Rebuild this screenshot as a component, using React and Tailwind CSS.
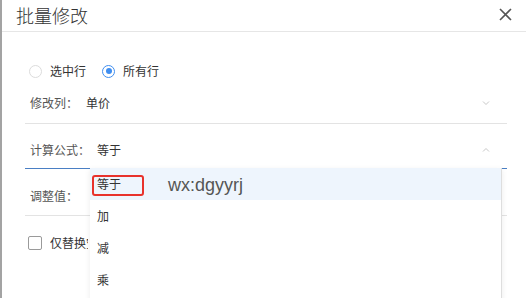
import React from "react";

const font = { fontFamily: '"Noto Sans CJK SC", "Noto Sans", sans-serif' };

function Chevron({ up }) {
  return (
    <svg width="10" height="10" viewBox="0 0 10 10" className="text-[#c8c8c8]">
      <path
        d={up ? "M2 6.5 L5 3.5 L8 6.5" : "M2 3.5 L5 6.5 L8 3.5"}
        fill="none"
        stroke="currentColor"
        strokeWidth="1"
      />
    </svg>
  );
}

function Radio({ checked, label }) {
  return (
    <div className="flex items-center">
      <span
        className={`w-[13px] h-[13px] rounded-full border flex items-center justify-center ${
          checked ? "border-[#3f8ef0]" : "border-[#dcdcdc]"
        }`}
      >
        {checked && <span className="w-[6px] h-[6px] rounded-full bg-[#3f8ef0]"></span>}
      </span>
      <span className="ml-[8px] text-[12px] text-[#333]">{label}</span>
    </div>
  );
}

function App() {
  const options = ["等于", "加", "减", "乘"];
  return (
    <div
      className="relative w-[526px] h-[298px] overflow-hidden bg-white border-l-2 border-[#a3a3a3]"
      style={font}
    >
      {/* header */}
      <div className="h-[32px] flex items-center justify-between border-b border-[#e6e6e6] pl-[14px] pr-[14px] pb-[2px]">
        <h2 className="text-[18px] font-light text-[#333] leading-none">批量修改</h2>
        <svg width="13" height="13" viewBox="0 0 13 13" className="text-[#555]">
          <path d="M1 1 L12 12 M12 1 L1 12" stroke="currentColor" strokeWidth="1.6" />
        </svg>
      </div>

      <div className="pl-[23px] pr-[19px]">
        <div className="mt-[24px] h-[30px] flex items-center pl-[4px] gap-[16px]">
          <Radio label="选中行" />
          <Radio checked label="所有行" />
        </div>

        <div className="h-[38px] flex items-center justify-between border-b border-[#e3e3e3] pl-[5px] pr-[16px] pb-[3px] text-[12px]">
          <div className="flex items-center">
            <span className="text-[#555]">修改列：</span>
            <span className="ml-[8px] text-[#333]">单价</span>
          </div>
          <Chevron />
        </div>

        <div className="h-[45px] flex items-center justify-between border-b border-[#4a7fc4] pl-[5px] pr-[16px] pt-[8px] text-[12px]">
          <div className="flex items-center">
            <span className="text-[#555]">计算公式：</span>
            <span className="ml-[7px] text-[#333]">等于</span>
          </div>
          <Chevron up />
        </div>

        <div className="h-[47px] flex items-center border-b border-[#e3e3e3] pl-[5px] pt-[8px] text-[12px]">
          <span className="text-[#555]">调整值：</span>
        </div>

        <div className="mt-[19px] h-[16px] flex items-center pl-[3px]">
          <span className="w-[14px] h-[14px] rounded-[2px] border border-[#9a9a9a]"></span>
          <span className="ml-[8px] w-[38px] overflow-hidden whitespace-nowrap text-[12px] text-[#333]">
            仅替换空值
          </span>
        </div>
      </div>

      {/* dropdown */}
      <div className="absolute left-[88px] top-[168px] w-[412px] h-[140px] bg-white border-r border-[#dedede] shadow-[0_2px_6px_rgba(0,0,0,0.08)]">
        {options.map((o, i) => (
          <div
            key={o}
            className={`relative h-[32px] flex items-center pl-[7px] text-[12px] text-[#333] ${
              i === 0 ? "bg-[#eef5fd]" : ""
            }`}
          >
            {o}
            {i === 0 && (
              <>
                <span className="absolute left-[2px] top-[7px] w-[52px] h-[21px] rounded-[3px] border-2 border-[#e8322c]"></span>
                <span
                  className="absolute left-[78px] top-[4px] text-[18px] text-[#555]"
                  style={{ fontFamily: '"Liberation Sans", Arial, sans-serif' }}
                >
                  wx:dgyyrj
                </span>
              </>
            )}
          </div>
        ))}
      </div>
    </div>
  );
}

export default App;
